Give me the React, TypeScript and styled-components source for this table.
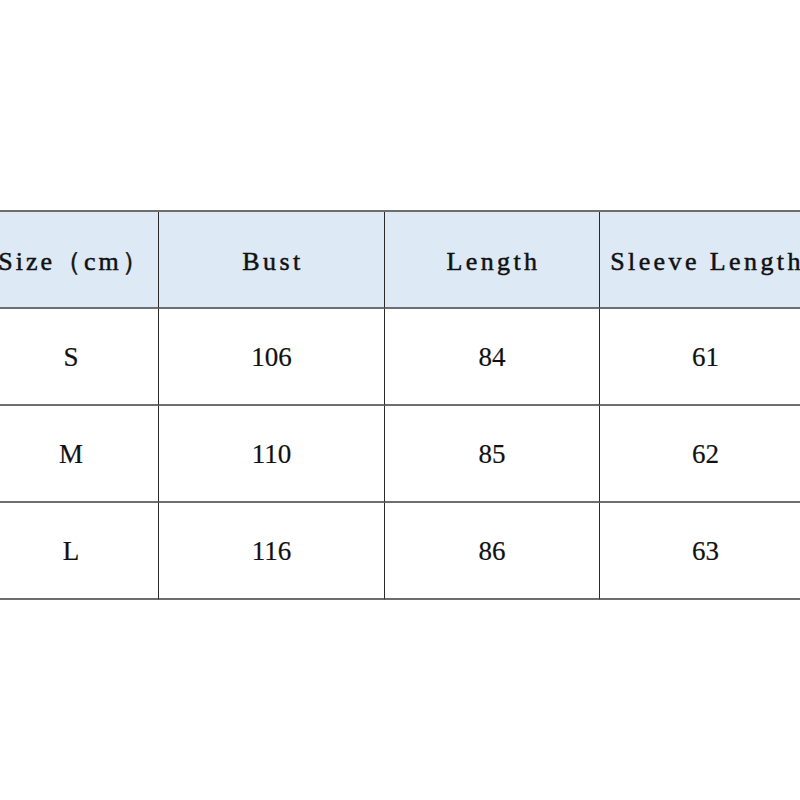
import styled, { createGlobalStyle } from 'styled-components';

const GlobalStyle = createGlobalStyle`
  html, body {
    margin: 0;
    padding: 0;
    background: #fff;
    overflow: hidden;
  }
`;

const header = ['Size（cm）', 'Bust', 'Length', 'Sleeve Length'];

const rows = [
  ['S', '106', '84', '61'],
  ['M', '110', '85', '62'],
  ['L', '116', '86', '63'],
];

export default function App() {
  return (
    <>
      <GlobalStyle />
      <Page>
        <Table>
          {header.map((h, i) => (
            <HeadCell key={h} $first={i === 0}>{h}</HeadCell>
          ))}
          {rows.map((row) =>
            row.map((v, i) => (
              <BodyCell key={row[0] + i} $first={i === 0}>{v}</BodyCell>
            ))
          )}
        </Table>
      </Page>
    </>
  );
}

// Styled Components

const Page = styled.div`
  width: 800px;
  height: 800px;
  padding-top: 210px;
  box-sizing: border-box;
  overflow: hidden;
`;

const Table = styled.div`
  display: grid;
  grid-template-columns: 174px 226px 215px 212px;
  grid-template-rows: 97px 97px 97px 97px;
  margin-left: -16px;
  width: 827px;
  border-top: 2px solid #6e6e6e;
`;

const Cell = styled.div<{ $first?: boolean }>`
  display: flex;
  align-items: center;
  justify-content: center;
  border-bottom: 2px solid #6e6e6e;
  border-left: ${({ $first }) => ($first ? 'none' : '1px solid #2a2a2a')};
  box-sizing: border-box;
  color: #111;
`;

const HeadCell = styled(Cell)`
  background: #dde9f5;
  font-family: 'Liberation Serif', serif;
  font-size: 26px;
  letter-spacing: ${({ $first }) => ($first ? '3px' : '3.4px')};
  padding-top: 4px;
  padding-left: ${({ $first }) => ($first ? '7px' : '3px')};
  white-space: nowrap;
  -webkit-text-stroke: 0.5px #111;
`;

const BodyCell = styled(Cell)`
  font-family: 'Liberation Serif', serif;
  font-size: 27px;
  padding-top: 2px;
  -webkit-text-stroke: 0.2px #111;
`;
